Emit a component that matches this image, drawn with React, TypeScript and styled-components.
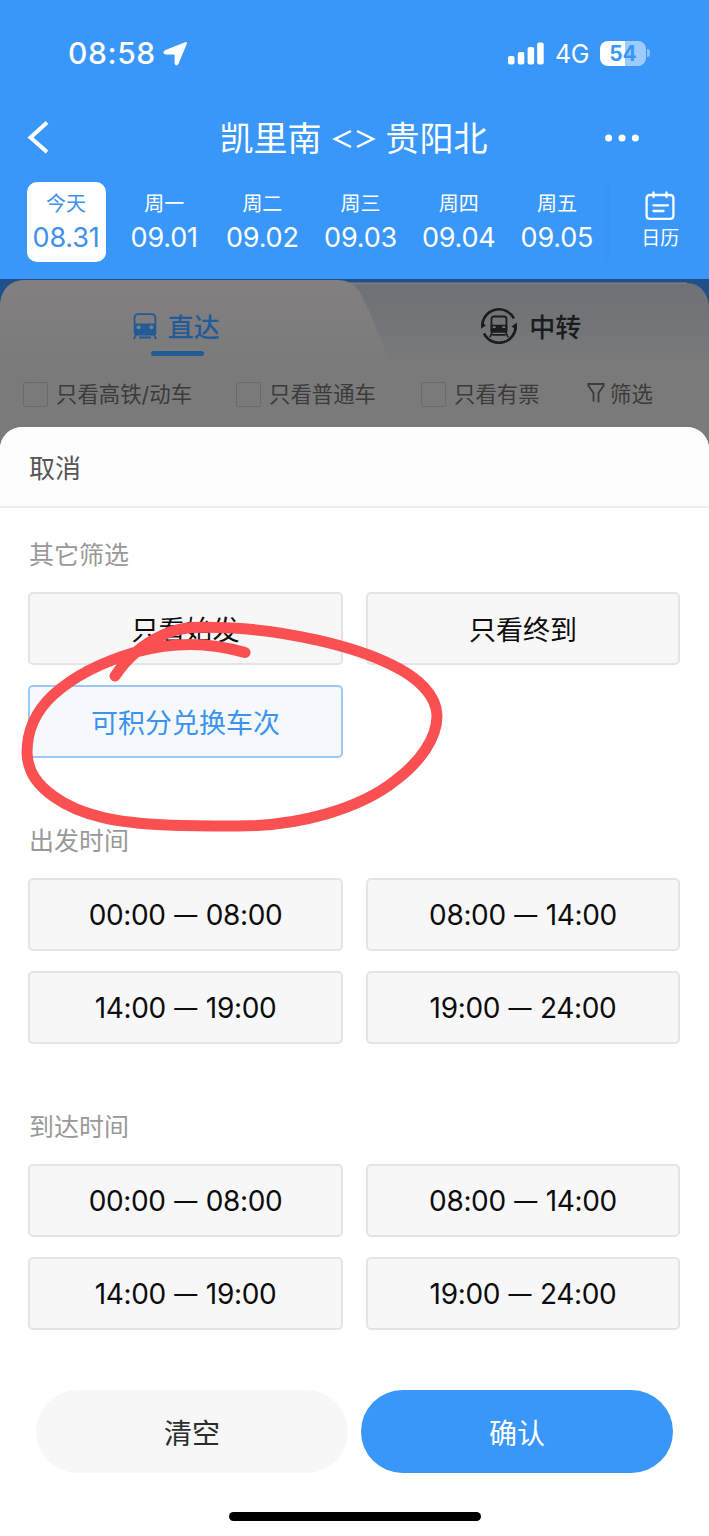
import React from "react";
import styled, { createGlobalStyle } from "styled-components";

const BLUE = "#3a97fa";

const GlobalStyle = createGlobalStyle`
  * { box-sizing: border-box; }
  html, body { margin: 0; padding: 0; background: #fff; }
  body { font-family: Inter, "Noto Sans CJK SC", sans-serif; }
  button { font: inherit; border: 0; padding: 0; margin: 0; background: none; color: inherit; }
`;

const Screen = styled.div`
  position: relative;
  width: 709px;
  height: 1536px;
  overflow: hidden;
  display: flex;
  flex-direction: column;
  background: #fff;
`;

const Header = styled.header`
  height: 279px;
  flex: none;
  display: flex;
  flex-direction: column;
  background: ${BLUE};
  color: #fff;
`;

const StatusBar = styled.div`
  height: 106px;
  padding: 0 59px 0 68px;
  display: flex;
  align-items: center;
  justify-content: space-between;
`;

const StatusGroup = styled.div<{ $gap: number }>`
  display: flex;
  align-items: center;
  gap: ${(p) => p.$gap}px;
`;

const Clock = styled.span`
  font-size: 30px;
  line-height: 36px;
  font-weight: 500;
  letter-spacing: 0.6px;
`;

const Network = styled.span`
  padding-top: 1px;
  font-size: 25px;
  line-height: 30px;
  letter-spacing: -0.4px;
`;

const Battery = styled.div`
  display: flex;
  align-items: center;
  gap: 1px;
`;

const BatteryBody = styled.div`
  width: 46px;
  height: 25px;
  border-radius: 8px;
  background: linear-gradient(90deg, #fff 54%, #9dcbfc 54%);
  display: flex;
  align-items: center;
  justify-content: center;
  color: ${BLUE};
  font-size: 21px;
  line-height: 25px;
  font-weight: 700;
`;

const BatteryTip = styled.div`
  width: 3px;
  height: 8px;
  border-radius: 0 3px 3px 0;
  background: #8cc2fc;
`;

const TitleBar = styled.div`
  height: 64px;
  padding: 0 70px 0 26px;
  display: grid;
  grid-template-columns: 44px 1fr 44px;
  align-items: center;
`;

const Title = styled.h1`
  margin: 0;
  padding: 2px 0 0 42px;
  display: flex;
  align-items: center;
  justify-content: center;
  gap: 10px;
  font-size: 34px;
  line-height: 44px;
  font-weight: 400;
`;

const MoreIcon = styled.svg`
  justify-self: end;
`;

const DateStrip = styled.div`
  padding: 12px 0 0 26.5px;
  display: flex;
`;

const Days = styled.div`
  display: flex;
  gap: 19.2px;
`;

const Day = styled.div<{ $active?: boolean }>`
  width: 79px;
  height: 80px;
  padding-top: 8px;
  border-radius: 10px;
  display: flex;
  flex-direction: column;
  align-items: center;
  background: ${(p) => (p.$active ? "#fff" : "transparent")};
  color: ${(p) => (p.$active ? "#3e91e8" : "#fff")};
`;

const DayName = styled.span`
  font-size: 20px;
  line-height: 28px;
`;

const DayDate = styled.span`
  margin-top: 4px;
  font-size: 27px;
  line-height: 32px;
  letter-spacing: -0.2px;
  white-space: nowrap;
`;

const StripShade = styled.div`
  width: 8px;
  height: 80px;
  margin-left: 5px;
  margin-right: 2px;
  background: linear-gradient(90deg, rgba(40, 120, 220, 0), rgba(40, 120, 220, 0.14));
`;

const CalendarButton = styled.button`
  width: 99px;
  height: 80px;
  padding-top: 9px;
  display: flex;
  flex-direction: column;
  align-items: center;
`;

const CalendarLabel = styled.span`
  margin-top: 5px;
  font-size: 19px;
  line-height: 26px;
`;

const Backdrop = styled.section`
  position: relative;
  height: 182px;
  flex: none;
  display: flex;
  flex-direction: column;
  background: linear-gradient(#1f5089 0, #1f5089 60px, #7a7a7a 60px);
`;

const TabShape = styled.svg`
  position: absolute;
  left: 0;
  top: 0;
`;

const Tabs = styled.div`
  position: relative;
  height: 82px;
  display: grid;
  grid-template-columns: 1fr 1fr;
`;

const Tab = styled.div<{ $active?: boolean }>`
  padding-top: 28px;
  display: flex;
  flex-direction: column;
  align-items: center;
  color: ${(p) => (p.$active ? "#235a98" : "#1b1c1e")};
  font-size: 26px;
  font-weight: 500;
`;

const TabLabel = styled.div<{ $gap: number }>`
  height: 38px;
  display: flex;
  align-items: center;
  gap: ${(p) => p.$gap}px;
`;

const TabText = styled.span`
  padding-bottom: 2px;
  margin-right: 2px;
`;

const TabUnderline = styled.div`
  width: 53px;
  height: 5px;
  margin-top: 6px;
  border-radius: 3px;
  background: #235a98;
`;

const QuickFilters = styled.div`
  position: relative;
  height: 66px;
  padding-left: 23px;
  display: flex;
  align-items: center;
  color: #3b3b3b;
  font-size: 21.4px;
`;

const QuickFilter = styled.label<{ $width?: number; $gap?: number }>`
  width: ${(p) => (p.$width ? p.$width + "px" : "auto")};
  display: flex;
  align-items: center;
  gap: ${(p) => p.$gap ?? 8}px;
  white-space: nowrap;
`;

const FilterText = styled.span`
  padding-bottom: 3px;
`;

const Box = styled.span`
  width: 25px;
  height: 25px;
  border: 1.5px solid #6a6a6a;
  border-radius: 2px;
`;

const Sheet = styled.main`
  position: relative;
  flex: 1;
  margin-top: -34px;
  border-radius: 22px 22px 0 0;
  background: #fff;
  overflow: hidden;
`;

const SheetHeader = styled.div`
  height: 81px;
  padding-left: 29px;
  display: flex;
  align-items: center;
  background: #fdfdfd;
  border-bottom: 2px solid #ececec;
  color: #565656;
  font-size: 26px;
`;

const SheetBody = styled.div`
  padding: 28px 29px 0 28px;
  display: flex;
  flex-direction: column;
  gap: 64px;
`;

const GroupTitle = styled.h2`
  margin: 0 0 20px 1px;
  height: 36px;
  line-height: 38px;
  font-size: 25px;
  font-weight: 400;
  color: #999;
`;

const Options = styled.div`
  display: grid;
  grid-template-columns: 315px 314px;
  column-gap: 23px;
  row-gap: 20px;
`;

const Option = styled.button<{ $selected?: boolean }>`
  height: 73px;
  display: flex;
  align-items: center;
  justify-content: center;
  border: 2px solid ${(p) => (p.$selected ? "#9dc8f3" : "#e4e4e4")};
  border-radius: 5px;
  background: ${(p) => (p.$selected ? "#f5f9fd" : "#f7f7f7")};
  color: ${(p) => (p.$selected ? "#3c93ee" : "#0c0c0c")};
  font-size: 27px;
`;

const TimeOption = styled(Option)`
  gap: 8.5px;
  font-size: 28px;
  letter-spacing: -0.35px;
`;

const Dash = styled.span`
  font-size: 23px;
  letter-spacing: 0;
`;

const Actions = styled.div`
  margin-top: 60px;
  padding-left: 36px;
  display: flex;
  gap: 13px;
`;

const Action = styled.button<{ $primary?: boolean }>`
  width: 312px;
  height: 83px;
  border-radius: 42px;
  background: ${(p) => (p.$primary ? BLUE : "#f7f7f7")};
  color: ${(p) => (p.$primary ? "#fff" : "#2d2d2d")};
  font-size: 28px;
`;

const HomeIndicator = styled.div`
  width: 252px;
  height: 9px;
  margin: 39px 0 0 229px;
  border-radius: 5px;
  background: #000;
`;

const Annotation = styled.svg`
  position: absolute;
  left: 0;
  top: 600px;
  pointer-events: none;
`;

const Train = () => (
  <svg width="24" height="27" viewBox="0 0 24 27" fill="none">
    <path d="M1.6 5Q1.6 1.2 5.4 1.2H18.6Q22.4 1.2 22.4 5V19.5Q22.4 21.5 20.4 21.5H3.6Q1.6 21.5 1.6 19.5Z" stroke="currentColor" strokeWidth="1.8" />
    <path d="M1.6 10.5H22.4V19.5Q22.4 21.5 20.4 21.5H3.6Q1.6 21.5 1.6 19.5Z" fill="currentColor" />
    <circle cx="5.6" cy="14.2" r="2" fill="#808080" />
    <circle cx="18.4" cy="14.2" r="2" fill="#808080" />
    <path d="M3.2 21.5L.8 26.2M20.8 21.5L23.2 26.2M6 24.5H18" stroke="currentColor" strokeWidth="1.8" />
  </svg>
);

const TransferTrain = () => (
  <svg width="38" height="38" viewBox="0 0 38 38" fill="none">
    <path d="M2.3 19A16.7 16.7 0 0 1 33.9 11.5M35.7 18.5A16.7 16.7 0 0 1 4 26.4" stroke="currentColor" strokeWidth="2.6" />
    <path d="M1.1 15V21.8L6 18.2ZM36.9 23V15.5L31.5 19.5Z" fill="currentColor" />
    <g transform="translate(9 8.5) scale(.83)">
      <path d="M3 4Q3 1.2 6 1.2H18Q21 1.2 21 4V19.5H3Z" stroke="currentColor" strokeWidth="2.2" />
      <path d="M2 11H22V18Q22 20.5 19.5 20.5H4.5Q2 20.5 2 18Z" fill="currentColor" />
      <path d="M4.5 14H8M16 14H19.5" stroke="#777" strokeWidth="2.3" />
      <path d="M4 20L1 26M20 20L23 26M4 23.3H20" stroke="currentColor" strokeWidth="1.9" />
    </g>
  </svg>
);

const days = [
  ["今天", "08.31"],
  ["周一", "09.01"],
  ["周二", "09.02"],
  ["周三", "09.03"],
  ["周四", "09.04"],
  ["周五", "09.05"],
];

const times = [
  ["00:00", "08:00"],
  ["08:00", "14:00"],
  ["14:00", "19:00"],
  ["19:00", "24:00"],
];

const TimeGroup = ({ title }: { title: string }) => (
  <section>
    <GroupTitle>{title}</GroupTitle>
    <Options>
      {times.map(([from, to]) => (
        <TimeOption key={from}>
          <span>{from}</span>
          <Dash>—</Dash>
          <span>{to}</span>
        </TimeOption>
      ))}
    </Options>
  </section>
);

export default function App() {
  return (
    <Screen>
      <GlobalStyle />
      <Header>
        <StatusBar>
          <StatusGroup $gap={7}>
            <Clock>08:58</Clock>
            <svg width="25" height="25" viewBox="0 0 25 25">
              <path d="M23 2L14.5 22.5Q13.2 24.8 12.600 22V13.200Q12.6 12.4 11.7 12.4H2.6Q.2 11.8 2.4 10.3Z" fill="#fff" stroke="#fff" strokeWidth="2" strokeLinejoin="round" />
            </svg>
          </StatusGroup>
          <StatusGroup $gap={11}>
            <svg width="36" height="23" viewBox="0 0 36 23" fill="#fff">
              <rect x="0" y="14" width="6.5" height="8.5" rx="2" />
              <rect x="9.8" y="10" width="6.5" height="12.5" rx="2" />
              <rect x="19.6" y="5" width="6.5" height="17.5" rx="2" />
              <rect x="29.2" y="0.5" width="6.5" height="22" rx="2" />
            </svg>
            <Network>4G</Network>
            <Battery>
              <BatteryBody>54</BatteryBody>
              <BatteryTip />
            </Battery>
          </StatusGroup>
        </StatusBar>
        <TitleBar>
          <svg width="24" height="34" viewBox="0 0 24 34" fill="none">
            <path d="M21 1.5L4.5 16.5L21 31" stroke="#fff" strokeWidth="4" />
          </svg>
          <Title>
            <span>凯里南</span>
            <svg width="44" height="20" viewBox="0 0 44 20" fill="none" stroke="#fff" strokeWidth="2.5">
              <path d="M19 2L3 10L19 18M25 2L41 10L25 18" />
            </svg>
            <span>贵阳北</span>
          </Title>
          <MoreIcon width="34" height="8" viewBox="0 0 34 8" fill="#fff">
            <circle cx="3.6" cy="4" r="3.5" />
            <circle cx="17" cy="4" r="3.5" />
            <circle cx="30.4" cy="4" r="3.5" />
          </MoreIcon>
        </TitleBar>
        <DateStrip>
          <Days>
            {days.map(([name, date], i) => (
              <Day key={date} $active={i === 0}>
                <DayName>{name}</DayName>
                <DayDate>{date}</DayDate>
              </Day>
            ))}
          </Days>
          <StripShade />
          <CalendarButton>
            <svg width="30" height="30" viewBox="0 0 30 30" fill="none" stroke="#fff" strokeWidth="2.3" strokeLinecap="round">
              <path d="M5 4H25Q28.4 4 28.4 7.4V24.4Q28.4 27.8 25 27.8H5Q1.6 27.8 1.6 24.4V7.4Q1.6 4 5 4ZM8.5 1.5V6M21.5 1.5V6M8.5 14.3H23M8.5 20H18.5" />
            </svg>
            <CalendarLabel>日历</CalendarLabel>
          </CalendarButton>
        </DateStrip>
      </Header>

      <Backdrop>
        <TabShape width="709" height="100" viewBox="0 0 709 100">
          <defs>
            <linearGradient id="front" x1="0" y1="0" x2="0" y2="1">
              <stop offset="0" stopColor="#827f81" />
              <stop offset="1" stopColor="#7a7a7a" />
            </linearGradient>
            <linearGradient id="back" x1="0" y1="0" x2="0" y2="1">
              <stop offset="0" stopColor="#6e7276" />
              <stop offset="0.6" stopColor="#737678" />
              <stop offset="1" stopColor="#7a7a7a" />
            </linearGradient>
          </defs>
          <path d="M300 4H687Q706 5 709 27V82H300Z" fill="url(#back)" />
          <path d="M340 4H687" stroke="#85898c" strokeWidth="1" />
          <path d="M0 24Q3 2 24 1H338Q352 1 359 12Q374 39 388 82V100H0Z" fill="url(#front)" />
          <path d="M388 81H709V100H388Z" fill="#7a7a7a" />
        </TabShape>
        <Tabs>
          <Tab $active>
            <TabLabel $gap={11}>
              <Train />
              <TabText>直达</TabText>
            </TabLabel>
            <TabUnderline />
          </Tab>
          <Tab>
            <TabLabel $gap={11}>
              <TransferTrain />
              <TabText>中转</TabText>
            </TabLabel>
          </Tab>
        </Tabs>
        <QuickFilters>
          <QuickFilter $width={213}><Box /><FilterText>只看高铁/动车</FilterText></QuickFilter>
          <QuickFilter $width={185}><Box /><FilterText>只看普通车</FilterText></QuickFilter>
          <QuickFilter $width={166}><Box /><FilterText>只看有票</FilterText></QuickFilter>
          <QuickFilter $gap={5}>
            <svg width="18" height="23" viewBox="0 0 18 23" fill="none" stroke="currentColor" strokeWidth="1.8">
              <path d="M6.5 18.5V10L1.3 2.5V1H16.7V2.5L11.5 10V19.5" />
            </svg>
            <FilterText>筛选</FilterText>
          </QuickFilter>
        </QuickFilters>
      </Backdrop>

      <Sheet>
        <SheetHeader>取消</SheetHeader>
        <SheetBody>
          <section>
            <GroupTitle>其它筛选</GroupTitle>
            <Options>
              <Option>只看始发</Option>
              <Option>只看终到</Option>
              <Option $selected>可积分兑换车次</Option>
            </Options>
          </section>
          <TimeGroup title="出发时间" />
          <TimeGroup title="到达时间" />
        </SheetBody>
        <Actions>
          <Action>清空</Action>
          <Action $primary>确认</Action>
        </Actions>
        <HomeIndicator />
      </Sheet>

      <Annotation width="460" height="250" viewBox="0 600 460 250" fill="none">
        <path
          d="M245 652.5C207 642 174 642 136 652C105 661 74 676 53 695C35 712 27 730 27 753C28 773 38 785 53 796C82 817 120 823 167 825C193 826 213 826 233 826C300 827 361 808 396 780C420 762 437 738 437 716C437 695 417 677 392 665C352 645 286 631 233 628C205 627 184 625 163 635C141 645 127 658 115 676"
          stroke="#fb5051"
          strokeWidth="11"
          strokeLinecap="round"
          strokeLinejoin="round"
        />
      </Annotation>
    </Screen>
  );
}
